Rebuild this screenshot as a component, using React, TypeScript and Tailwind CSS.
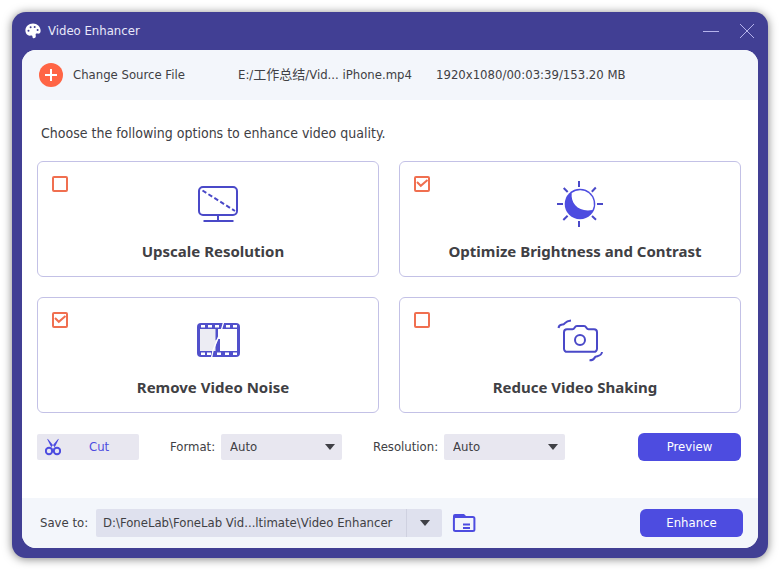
import { ReactNode, useState } from "react";

type EnhanceOption = {
  id: string;
  title: string;
  icon: ReactNode;
};

type OptionCardProp = {
  option: EnhanceOption;
  checked: boolean;
  onToggle: () => void;
};

type SelectFieldProp = {
  id: string;
  label: string;
  options: string[];
};

function PaletteIcon() {
  return (
    <svg viewBox="0 0 16 16" className="h-4 w-4" aria-hidden="true">
      <path
        fill="#fff"
        d="M8 .6C3.700.6.4 3.700.4 7.600c0 3.200 2.200 5.200 4.500 5.100 1.300 0 1.900-.4 2.400.3.4.7-.1 1.800 1 2.200 1.200.4 2.500-.6 2.500-1.900 0-1.300-.5-2.200.4-2.700.9-.5 1.700.2 2.800 0C15.200 10.300 15.700 9 15.600 7.500 15.400 3.500 12.200.6 8 .6Z"
      />
      <circle cx="3.500" cy="7.700" r="1" fill="#413f94" />
      <circle cx="5.600" cy="4.300" r="1" fill="#413f94" />
      <circle cx="9.700" cy="3.900" r="1" fill="#413f94" />
      <circle cx="12.600" cy="7" r="1" fill="#413f94" />
    </svg>
  );
}

function MonitorIcon() {
  return (
    <svg
      viewBox="0 0 48 48"
      className="h-12 w-12"
      fill="none"
      stroke="#4a49c8"
      strokeWidth="2"
      aria-hidden="true"
    >
      <rect x="5" y="6" width="38" height="28" rx="4" />
      <path d="M24 34v6M9.500 40h30" />
      <path d="M8.500 9.500 41 30" strokeDasharray="4.500 2.500" />
    </svg>
  );
}

function BrightnessIcon() {
  return (
    <svg viewBox="0 0 48 48" className="h-12 w-12" aria-hidden="true">
      <circle cx="24" cy="23" r="15.300" fill="#4d4ce0" />
      <path
        fill="#fff"
        d="M15.700 12C14.500 23 23 31.500 36.500 29A13.800 13.800 0 0 0 15.700 12Z"
      />
      <path
        stroke="#4a49c8"
        strokeWidth="2"
        d="M23 0v6M23 40v6M1 23h6M41 23h6M7.700 7l4 4M39.800 6.500l-4 4.300M7.300 39l4.300-4.300M40 38.800 36 35"
      />
    </svg>
  );
}

function FilmIcon() {
  return (
    <svg viewBox="0 0 48 48" className="h-12 w-12" aria-hidden="true">
      <rect x="3" y="6" width="43" height="34" rx="4" fill="#5150cb" />
      <path fill="#ececf3" d="M6 12h15.500v22H6z" />
      <path fill="#fff" d="M26 12h17v22H26z" />
      {/* lower left of the tear stays noisy, upper right is clean */}
      <path fill="#ececf3" d="M21 23.500 24 22l-5 12h-1z" />
      <path fill="#fff" d="M24 12h3v10h-3z" />
      <path
        fill="#fff"
        d="M7 8h4v2.500H7zM14 8h4v2.500h-4zM21 8h4v2.500h-4zM32 8h4v2.500h-4zM39 8h4v2.500h-4zM7 35.500h4v2.500H7zM13 35.500h4v2.500h-4zM23 35.500h4v2.500h-4zM31 35.500h4v2.500h-4zM39 35.500h4v2.500h-4z"
      />
      <path
        stroke="#fff"
        strokeWidth="1.300"
        fill="none"
        d="M29.500 5.500 27.500 12.500 19 33.500 17.500 41"
      />
    </svg>
  );
}

function CameraIcon() {
  return (
    <svg
      viewBox="0 0 48 48"
      className="h-12 w-12"
      fill="none"
      stroke="#4a49c8"
      strokeWidth="2"
      strokeLinejoin="round"
      aria-hidden="true"
    >
      <path d="M11 12.300h5.500c2.500 0 1.700-3.300 4.500-3.300h7c2.800 0 2 3.300 4.500 3.300H38a3 3 0 0 1 3 3v16.500a3 3 0 0 1-3 3H11a3 3 0 0 1-3-3V15.300a3 3 0 0 1 3-3Z" />
      <circle cx="24" cy="23" r="5" />
      <path d="M2.500 11c.5-3.500 2.500-3.200 4.500-3.500 2.500-.4 1.500-3.500 8-4" />
      <path d="M33.500 43.300c5.500.2 4.500-3.300 6.500-3.800 2.500-.7 5.500-.5 6-4.500" />
    </svg>
  );
}

function ScissorsIcon() {
  return (
    <svg
      viewBox="0 0 16 18"
      className="h-[18px] w-4"
      fill="none"
      stroke="#4d4ce0"
      strokeWidth="2"
      aria-hidden="true"
    >
      <circle cx="4" cy="13" r="3.200" />
      <circle cx="12" cy="13" r="3.200" />
      <path fill="#4d4ce0" stroke="none" d="M2 .8 3.400 1.500l7.400 9-1.800 1.300-2.500-2zM14 .8 12.600 1.500l-7.400 9L7 11.800l2.500-2z" />
    </svg>
  );
}

function FolderIcon() {
  return (
    <svg viewBox="0 0 24 20" className="h-5 w-6" fill="none" aria-hidden="true">
      <path fill="#4d4ce0" d="M1 5V3a2 2 0 0 1 2-2h9l3 3v1z" />
      <rect x="1.900" y="4" width="20.500" height="14" rx="1.500" stroke="#4d4ce0" strokeWidth="2" />
      <path stroke="#4d4ce0" strokeWidth="2" d="M11 11.500h7M11 15h7" />
    </svg>
  );
}

function Arrow() {
  return (
    <svg viewBox="0 0 10 6" className="h-[6px] w-[10px]" aria-hidden="true">
      <path fill="#3f4046" d="M0 0h10L5 6z" />
    </svg>
  );
}

function OptionCard({ option, checked, onToggle }: OptionCardProp) {
  return (
    <label className="grid rounded-md border border-[#c3c1e6] bg-white">
      <span className="col-start-1 row-start-1 grid h-4 w-4 mt-[14px] ml-[14px]">
        <input
          type="checkbox"
          checked={checked}
          onChange={onToggle}
          className="col-start-1 row-start-1 h-4 w-4 appearance-none rounded-xs border-2 border-[#f06f50]"
        />
        {checked && (
          <svg
            viewBox="0 0 16 16"
            className="pointer-events-none col-start-1 row-start-1 h-4 w-4"
            fill="none"
            stroke="#f06f50"
            strokeWidth="2"
            aria-hidden="true"
          >
            <path d="M3 6 6.800 9.800 13.500 4" />
          </svg>
        )}
      </span>
      <span className="col-start-1 row-start-1 flex flex-col items-center gap-3 pt-[19px] pb-[15px] pl-[10px]">
        <span className="pl-[10px]">{option.icon}</span>
        <span className="font-['Noto_Sans',sans-serif] text-[15px] leading-5 font-bold">
          {option.title}
        </span>
      </span>
    </label>
  );
}

function SelectField({ id, label, options }: SelectFieldProp) {
  return (
    <div className="flex items-center gap-[6px]">
      <label htmlFor={id}>{label}</label>
      <div className="grid w-[121px] items-center">
        <select
          id={id}
          className="col-start-1 row-start-1 h-[26px] appearance-none rounded-xs bg-[#e8e7f0] px-[9px]"
        >
          {options.map((el) => (
            <option key={el}>{el}</option>
          ))}
        </select>
        <span className="pointer-events-none col-start-1 row-start-1 mr-[7px] justify-self-end">
          <Arrow />
        </span>
      </div>
    </div>
  );
}

const enhanceOptions: EnhanceOption[] = [
  { id: "upscale", title: "Upscale Resolution", icon: <MonitorIcon /> },
  {
    id: "brightness",
    title: "Optimize Brightness and Contrast",
    icon: <BrightnessIcon />,
  },
  { id: "noise", title: "Remove Video Noise", icon: <FilmIcon /> },
  { id: "shaking", title: "Reduce Video Shaking", icon: <CameraIcon /> },
];

export default function App() {
  const [selected, setSelected] = useState<string[]>(["brightness", "noise"]);

  function handleToggle(id: string) {
    setSelected((cur) =>
      cur.includes(id) ? cur.filter((el) => el !== id) : [...cur, id],
    );
  }

  return (
    <div className="flex min-h-screen flex-col bg-white p-3 font-['DejaVu_Sans_Condensed','Noto_Sans','Noto_Sans_CJK_SC',sans-serif] text-[13px] leading-4 text-[#404044]">
      <div className="flex flex-1 flex-col rounded-[14px] bg-[#413f94] px-[10px] pb-[10px] shadow-[0_1px_10px_rgba(0,0,0,0.5)]">
        <header className="flex h-[38px] items-center justify-between pr-[3px] pl-[3px]">
          <h1 className="flex items-center gap-[7px] text-[#e9e9fa]">
            <PaletteIcon />
            Video Enhancer
          </h1>
          <div className="flex items-center gap-5">
            <button type="button" aria-label="Minimize">
              <svg viewBox="0 0 16 16" className="h-4 w-4" stroke="#b5b3ec">
                <path d="M0 8.500h16" />
              </svg>
            </button>
            <button type="button" aria-label="Close">
              <svg viewBox="0 0 16 16" className="h-4 w-4" stroke="#b5b3ec">
                <path d="M1 1l14 14M15 1 1 15" />
              </svg>
            </button>
          </div>
        </header>

        <main className="flex flex-1 flex-col overflow-hidden rounded-[14px] bg-white">
          <div className="flex h-[50px] items-center bg-[#f3f6fb] px-[17px]">
            <button type="button" className="flex w-[199px] items-center gap-[10px]">
              <svg viewBox="0 0 24 24" className="h-6 w-6" aria-hidden="true">
                <circle cx="12" cy="12" r="12" fill="#ff6545" />
                <path stroke="#fff" strokeWidth="2" d="M12 6v12M6 12h12" />
              </svg>
              Change Source File
            </button>
            <span className="w-[198px]">E:/工作总结/Vid... iPhone.mp4</span>
            <span>1920x1080/00:03:39/153.20 MB</span>
          </div>

          <section className="flex-1 pt-[23px] pr-[17px] pb-[37px] pl-[15px]">
            <h2 className="pl-1 text-[14px] leading-5">
              Choose the following options to enhance video quality.
            </h2>
            <div className="mt-[18px] grid grid-cols-2 gap-5">
              {enhanceOptions.map((el) => (
                <OptionCard
                  key={el.id}
                  option={el}
                  checked={selected.includes(el.id)}
                  onToggle={() => handleToggle(el.id)}
                />
              ))}
            </div>
            <div className="mt-5 flex items-center gap-[31px]">
              <button
                type="button"
                className="flex h-[26px] w-[102px] items-center gap-7 rounded-xs bg-[#e8e7f0] pl-2 text-[#4d4ce0]"
              >
                <ScissorsIcon />
                Cut
              </button>
              <SelectField id="format" label="Format:" options={["Auto", "MP4", "MKV"]} />
              <SelectField id="resolution" label="Resolution:" options={["Auto", "1280x720", "1920x1080"]} />
              <button
                type="button"
                className="ml-auto h-7 w-[103px] rounded-md bg-[#4d4ce0] text-white"
              >
                Preview
              </button>
            </div>
          </section>

          <footer className="flex h-[50px] items-center bg-[#f3f6fb] pr-[15px] pl-[18px]">
            <label htmlFor="path" className="w-14">
              Save to:
            </label>
            <div className="flex h-7 w-[346px] rounded-xs bg-[#dfe1ee]">
              <input
                id="path"
                readOnly
                value="D:\FoneLab\FoneLab Vid...ltimate\Video Enhancer"
                className="min-w-0 flex-1 px-[7px]"
              />
              <button
                type="button"
                aria-label="Recent folders"
                className="flex w-9 items-center justify-center border-l border-[#cfd1e0]"
              >
                <Arrow />
              </button>
            </div>
            <button type="button" aria-label="Open folder" className="ml-[10px]">
              <FolderIcon />
            </button>
            <button
              type="button"
              className="ml-auto h-7 w-[103px] rounded-md bg-[#4d4ce0] text-white"
            >
              Enhance
            </button>
          </footer>
        </main>
      </div>
    </div>
  );
}
